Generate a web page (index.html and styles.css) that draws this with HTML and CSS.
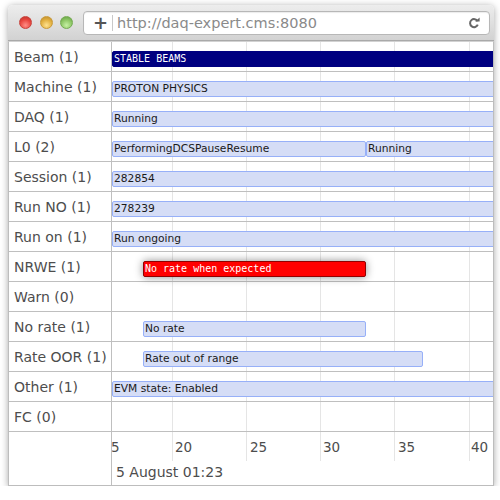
FILE: index.html
```html
<!DOCTYPE html>
<html>
<head>
<meta charset="utf-8">
<link rel="stylesheet" href="styles.css">
</head>
<body>
<div class="window">
  <div class="titlebar">
    <div class="lights">
      <span class="light red"></span>
      <span class="light yellow"></span>
      <span class="light green"></span>
    </div>
    <div class="url">
      <span class="plus">+</span>
      <span class="sep"></span>
      <span class="addr">http://daq-expert.cms:8080</span>
      <svg class="reload" width="12" height="12" viewBox="0 0 12 12">
        <path d="M9.6 4.2 A4 4 0 1 0 9.8 7.6" fill="none" stroke="#666" stroke-width="2"/>
        <polygon points="7.2,4.6 11.6,4.6 11.6,0.4" fill="#666"/>
      </svg>
    </div>
  </div>
  <div class="timeline">
    <div class="labels">
      <div class="label">Beam (1)</div>
      <div class="label">Machine (1)</div>
      <div class="label">DAQ (1)</div>
      <div class="label">L0 (2)</div>
      <div class="label">Session (1)</div>
      <div class="label">Run NO (1)</div>
      <div class="label">Run on (1)</div>
      <div class="label">NRWE (1)</div>
      <div class="label">Warn (0)</div>
      <div class="label">No rate (1)</div>
      <div class="label">Rate OOR (1)</div>
      <div class="label">Other (1)</div>
      <div class="label">FC (0)</div>
      <div class="label-axis"></div>
    </div>
    <div class="center">
      <div class="vline" style="left:60px"></div>
      <div class="vline" style="left:134px"></div>
      <div class="vline" style="left:208px"></div>
      <div class="vline" style="left:282px"></div>
      <div class="vline" style="left:357px"></div>

      <div class="row"><div class="item beam" style="left:0;width:400px">STABLE BEAMS</div></div>
      <div class="row"><div class="item" style="left:0;width:400px">PROTON PHYSICS</div></div>
      <div class="row"><div class="item" style="left:0;width:400px">Running</div></div>
      <div class="row">
        <div class="item" style="left:0;width:254px">PerformingDCSPauseResume</div>
        <div class="item" style="left:254px;width:200px">Running</div>
      </div>
      <div class="row"><div class="item" style="left:0;width:400px">282854</div></div>
      <div class="row"><div class="item" style="left:0;width:400px">278239</div></div>
      <div class="row"><div class="item" style="left:0;width:400px">Run ongoing</div></div>
      <div class="row"><div class="item alert" style="left:31px;width:223px">No rate when expected</div></div>
      <div class="row"></div>
      <div class="row"><div class="item" style="left:31px;width:223px">No rate</div></div>
      <div class="row"><div class="item" style="left:31px;width:280px">Rate out of range</div></div>
      <div class="row"><div class="item" style="left:0;width:400px">EVM state: Enabled</div></div>
      <div class="row"></div>

      <div class="axis">
        <div class="minor">
          <span class="tick" style="left:-1px">5</span>
          <span class="tick" style="left:63px">20</span>
          <span class="tick" style="left:138px">25</span>
          <span class="tick" style="left:211px">30</span>
          <span class="tick" style="left:286px">35</span>
          <span class="tick" style="left:359px">40</span>
        </div>
        <div class="major">5 August 01:23</div>
      </div>
    </div>
  </div>
</div>
</body>
</html>
```
FILE: styles.css
```css
* { box-sizing: border-box; }
html, body { margin: 0; padding: 0; background: #ffffff; }
body { font-family: "DejaVu Sans", sans-serif; }

.window {
  margin: 5px 0 0 8px;
  width: 486px;
  border-radius: 5px 5px 0 0;
  box-shadow: 0 1px 7px rgba(0,0,0,0.35);
  background: #fff;
}

.titlebar {
  height: 36px;
  border-bottom: 1px solid #a9a9a9;
  border-radius: 5px 5px 0 0;
  background: linear-gradient(#ededed, #d2d2d2);
  display: flex;
  align-items: center;
  padding-left: 11px;
}

.lights { display: flex; gap: 7.5px; }
.light {
  width: 13px; height: 13px; border-radius: 50%;
  display: block;
}
.red { background: radial-gradient(circle at 50% 75%, #ff8e86 0%, #e9473f 55%, #b8302a 100%); border: 1px solid #c7423b; }
.yellow { background: radial-gradient(circle at 50% 75%, #ffe28f 0%, #e2b040 55%, #b8862a 100%); border: 1px solid #c99a38; }
.green { background: radial-gradient(circle at 50% 75%, #c6f1a4 0%, #8dc665 55%, #5f9a3d 100%); border: 1px solid #74ab52; }

.url {
  margin-left: 10px;
  width: 407px;
  height: 24px;
  background: #fff;
  border: 1px solid #b7b7b7;
  border-radius: 4px;
  box-shadow: inset 0 1px 1px rgba(0,0,0,0.08);
  display: flex;
  align-items: center;
  padding-left: 9px;
}
.plus {
  font-size: 18px;
  font-weight: bold;
  color: #555;
  line-height: 20px;
  width: 11px;
}
.sep {
  width: 1px; height: 16px; background: #c9c9c9;
  margin-left: 8px;
}
.addr {
  margin-left: 4px;
  font-size: 14.5px;
  color: #8a8a8a;
  line-height: 20px;
  flex: 1;
}
.reload { margin-right: 9px; }

.timeline {
  display: flex;
  border-top: 1px solid #d2d2d2;
  border-left: 1px solid #bdbdbd;
  border-right: 1px solid #bdbdbd;
  border-bottom: 1px solid #bdbdbd;
}

.labels {
  width: 103px;
  border-right: 1px solid #bfbfbf;
}
.label {
  height: 30px;
  border-bottom: 1px solid #bfbfbf;
  display: flex;
  align-items: center;
  padding-left: 5px;
  font-size: 14px;
  color: #4d4d4d;
  white-space: nowrap;
}
.label-axis { height: 53px; }

.center {
  position: relative;
  flex: 1;
  overflow: hidden;
}
.vline {
  position: absolute;
  top: 0;
  height: 419px;
  width: 1px;
  background: #e5e5e5;
}
.row {
  position: relative;
  height: 30px;
  border-bottom: 1px solid #bfbfbf;
}
.item {
  position: absolute;
  top: 9px;
  height: 16px;
  border: 1px solid #97b0f8;
  background: #d5ddf6;
  border-radius: 2px;
  color: #1a1a1a;
  font-size: 10.7px;
  line-height: 14px;
  padding-left: 1px;
  white-space: nowrap;
  overflow: hidden;
}
.item.beam {
  background: #000080;
  border-color: #000080;
  color: #fff;
  font-family: "DejaVu Sans Mono", monospace;
  font-size: 10px;
}
.item.alert {
  background: #ff0000;
  border-color: #900000;
  color: #fff;
  font-family: "DejaVu Sans Mono", monospace;
  font-size: 10px;
  padding-left: 1px;
  box-shadow: 0 0 9px rgba(0,0,0,0.45);
  z-index: 2;
}

.axis { height: 53px; }
.minor { position: relative; height: 29px; }
.tick {
  position: absolute;
  top: 7px;
  font-size: 13.5px;
  line-height: 16px;
  color: #4d4d4d;
}
.major {
  height: 24px;
  padding: 3px 0 0 4px;
  font-size: 14px;
  line-height: 16px;
  color: #4d4d4d;
}
```
